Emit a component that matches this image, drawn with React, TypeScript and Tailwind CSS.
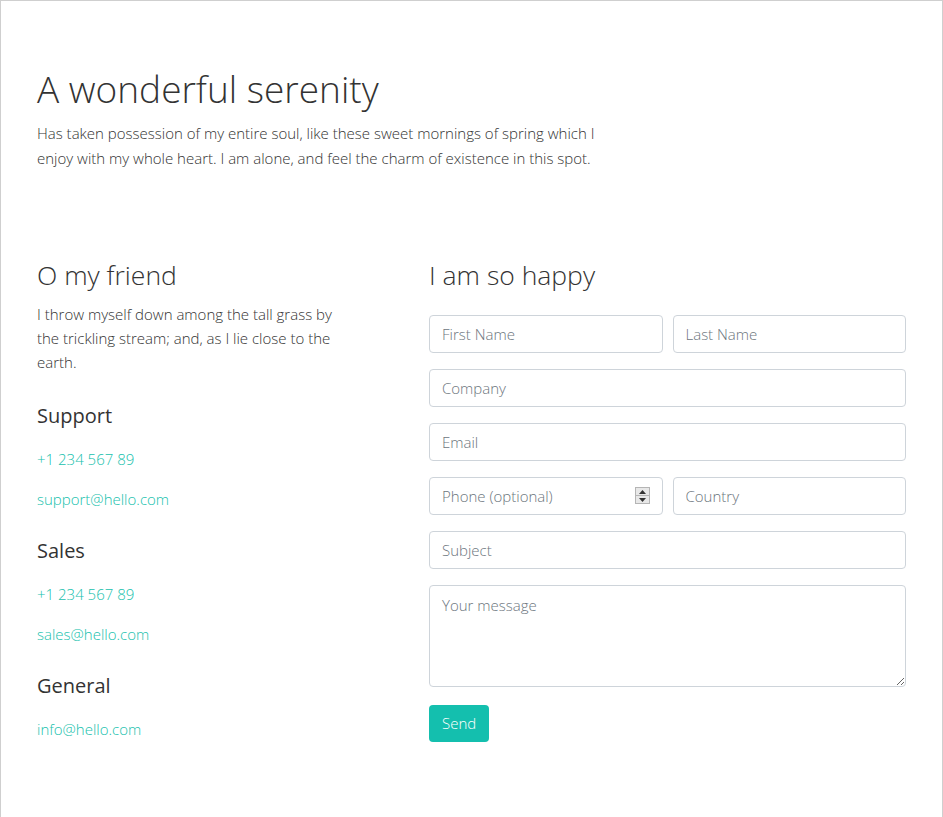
import React from "react";

const FONT = { fontFamily: '"Open Sans", "Noto Sans", sans-serif' };

const inputCls =
  "w-full h-[38px] rounded border border-[#ced4da] bg-white px-3 text-[15px] font-light text-[#495057] placeholder:text-[#6c757d] outline-none";

function ContactGroup({ title, items, first }: { title: string; items: string[]; first?: boolean }) {
  return (
    <div className={first ? "mt-[28px]" : "mt-[25px]"}>
      <h4 className="text-[20px] font-normal text-[#333] leading-[28px]">{title}</h4>
      {items.map((item, i) => (
        <a
          key={item}
          href="#"
          className={`block ${i === 0 ? "mt-[17px]" : "mt-[15px]"} text-[15px] font-light text-[#17bfad] leading-[25px]`}
        >
          {item}
        </a>
      ))}
    </div>
  );
}

function Spinner() {
  return (
    <div className="absolute right-[13px] top-[10px] flex flex-col w-[15px] h-[17px] border border-[#b5b5b5] bg-[#e8e8e8]">
      <div className="flex-1 flex items-center justify-center border-b border-[#b5b5b5]">
        <svg width="7" height="4" viewBox="0 0 7 4"><path d="M3.5 0L7 4H0z" fill="#333" /></svg>
      </div>
      <div className="flex-1 flex items-center justify-center">
        <svg width="7" height="4" viewBox="0 0 7 4"><path d="M0 0h7L3.5 4z" fill="#333" /></svg>
      </div>
    </div>
  );
}

export default function App() {
  return (
    <div style={FONT} className="min-h-[830px] bg-white border-l border-t border-r border-[#cfcfcf] text-[#333]">
      <div className="px-[36px]">
        {/* Intro */}
        <section className="pt-[64px]">
          <h1 className="text-[37px] font-light leading-[48px] text-[#333]">A wonderful serenity</h1>
          <p className="mt-[8px] max-w-[560px] text-[15px] font-light leading-[25px]">
            Has taken possession of my entire soul, like these sweet mornings of spring which I enjoy with my whole
            heart. I am alone, and feel the charm of existence in this spot.
          </p>
        </section>

        {/* Contact */}
        <section className="mt-[87px] grid grid-cols-[362px_1fr] gap-[30px]">
          <div>
            <h3 className="text-[26.5px] font-light leading-[34px]">O my friend</h3>
            <p className="mt-[10px] max-w-[310px] text-[15px] font-light leading-[24px]">
              I throw myself down among the tall grass by the trickling stream; and, as I lie close to the earth.
            </p>
            <ContactGroup first title="Support" items={["+1 234 567 89", "support@hello.com"]} />
            <ContactGroup title="Sales" items={["+1 234 567 89", "sales@hello.com"]} />
            <ContactGroup title="General" items={["info@hello.com"]} />
          </div>

          <form className="w-[477px]" onSubmit={(e) => e.preventDefault()}>
            <h3 className="text-[26.5px] font-light leading-[34px]">I am so happy</h3>
            <div className="mt-[23px] flex flex-col gap-4">
              <div className="grid grid-cols-2 gap-[10px]">
                <input className={inputCls} placeholder="First Name" />
                <input className={inputCls} placeholder="Last Name" />
              </div>
              <input className={inputCls} placeholder="Company" />
              <input className={inputCls} placeholder="Email" />
              <div className="grid grid-cols-2 gap-[10px]">
                <div className="relative">
                  <input className={inputCls} placeholder="Phone (optional)" />
                  <Spinner />
                </div>
                <input className={inputCls} placeholder="Country" />
              </div>
              <input className={inputCls} placeholder="Subject" />
              <textarea
                className="w-full h-[102px] rounded border border-[#ced4da] px-3 py-[8px] text-[15px] font-light text-[#495057] placeholder:text-[#6c757d] outline-none"
                placeholder="Your message"
              />
            </div>
            <button
              type="submit"
              className="mt-[18px] h-[37px] px-[13px] rounded bg-[#14bfae] text-white text-[15px] font-light"
            >
              Send
            </button>
          </form>
        </section>
      </div>
    </div>
  );
}
